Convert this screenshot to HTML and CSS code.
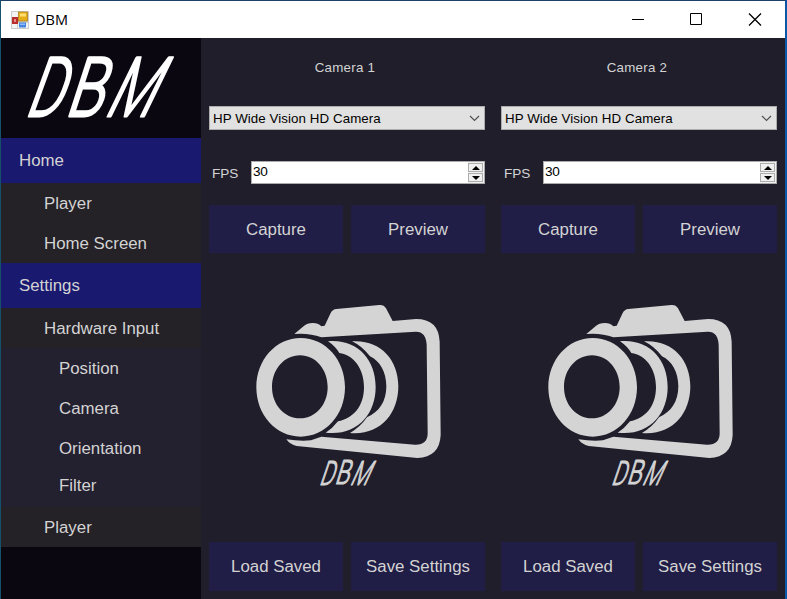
FILE: index.html
```html
<!DOCTYPE html>
<html lang="en">
<head>
<meta charset="utf-8">
<title>DBM</title>
<link rel="stylesheet" href="styles.css">
</head>
<body>
<svg class="defs" width="0" height="0" aria-hidden="true">
  <symbol id="camera" viewBox="0 0 615 600">
    <path fill="#d4d4d4" fill-rule="evenodd" d="M148 117 L172 97 Q184 84 204 84 Q219 84 229 94 L239 92 L257 54 Q263 43 274 42 L403 30 Q417 29 423 40 L443 78 L513 72 Q581 72 584 140 L587 420 Q584 486 517 489 L155 453 Q135 449 124 433 Q165 439 198 436 L229 425 L510 449 Q548 450 548 415 L545 150 Q543 109 512 110 L229 127 Q192 113 148 117Z"/>
    <path fill="#d4d4d4" fill-rule="evenodd" d="M167 129 C241 129 300 194 300 277 C300 360 241 425 167 425 C93 425 34 360 34 277 C34 194 93 129 167 129Z M165 181 C118 181 81 223 81 276 C81 329 118 370 165 370 C212 370 248 329 248 276 C248 223 212 181 165 181Z"/>
    <path fill="#d4d4d4" d="M249 139 C334 131 392 191 392 276 C392 360 334 424 242 413 Q263 400 279 379 C324 370 357 335 357 276 C357 221 326 180 283 174 Q270 153 249 139Z"/>
    <path fill="#d4d4d4" d="M321 139 C405 133 460 193 460 274 C460 357 405 422 315 414 Q347 395 366 367 C402 351 424 320 424 274 C424 232 405 198 375 184 Q351 153 321 139Z"/>
  </symbol>
  <symbol id="chevron" viewBox="0 0 11 7"><path d="M1 1 5.5 5.5 10 1" fill="none" stroke="#505050" stroke-width="1.2"/></symbol>
</svg>
<div class="window">
  <header class="titlebar">
    <svg class="app-icon" viewBox="0 0 18 18">
      <rect width="18" height="18" fill="#ccc"/><path d="M1 1h6v5H1zM7 12h10v5H7zM1 13h5v4H1z" fill="#f3f3f3"/>
      <rect x="1" y="6" width="6" height="7" fill="#b92d2d"/><rect x="3" y="8" width="2" height="3" fill="#e58c85"/>
      <rect x="7.5" y="1" width="9" height="9" fill="#e5ad18" stroke="#a87c17" stroke-width=".7"/><path d="M9 2.5h6v3H9z" fill="#ffdf70"/>
      <rect x="8" y="11.5" width="7" height="5" fill="#4684df"/><path d="M9 12.5h5v1.5H9z" fill="#91bdfb"/>
    </svg>
    <span class="caption">DBM</span>
    <svg class="controls" viewBox="0 0 130 13" fill="none" stroke="#000" stroke-width="1">
      <path d="M0 6.5h12M58.500.5h11v11h-11z"/><path stroke-width="1.3" d="M117 .5l12 12M129 .5l-12 12"/>
    </svg>
  </header>
  <div class="content">
    <nav class="sidebar">
      <svg class="logo" viewBox="0 0 200 100">
        <g class="mark">
          <text transform="translate(23 78) skewX(-20) scale(.67 1)">D</text>
          <text transform="translate(63 77.500) skewX(-18) scale(.74 1)">B</text>
          <text transform="translate(102 78) skewX(-26) scale(.65 1)">M</text>
        </g>
      </svg>
      <div class="group">Home</div>
      <div class="item">Player</div>
      <div class="item">Home Screen</div>
      <div class="group">Settings</div>
      <div class="item">Hardware Input</div>
      <div class="leaf">Position</div>
      <div class="leaf">Camera</div>
      <div class="leaf">Orientation</div>
      <div class="leaf last">Filter</div>
      <div class="item">Player</div>
    </nav>
    <main class="cameras">
      <section class="camera">
        <h2>Camera 1</h2>
        <div class="select"><span>HP Wide Vision HD Camera</span><svg><use href="#chevron"/></svg></div>
        <div class="fps"><label>FPS</label><div class="number"><span>30</span><div class="spin"><i class="up"></i><i class="down"></i></div></div></div>
        <div class="buttons"><div class="button">Capture</div><div class="button">Preview</div></div>
        <svg class="picture" viewBox="0 0 205 200">
          <use href="#camera" width="205" height="200"/>
          <g class="mark" transform="translate(65 160.500) scale(.385 .41)">
            <text transform="translate(23 71) skewX(-20) scale(.67 1)">D</text>
            <text transform="translate(63 70) skewX(-18) scale(.74 1)">B</text>
            <text transform="translate(102 71) skewX(-26) scale(.65 1)">M</text>
          </g>
        </svg>
        <div class="buttons tall"><div class="button">Load Saved</div><div class="button">Save Settings</div></div>
      </section>
      <section class="camera">
        <h2>Camera 2</h2>
        <div class="select"><span>HP Wide Vision HD Camera</span><svg><use href="#chevron"/></svg></div>
        <div class="fps"><label>FPS</label><div class="number"><span>30</span><div class="spin"><i class="up"></i><i class="down"></i></div></div></div>
        <div class="buttons"><div class="button">Capture</div><div class="button">Preview</div></div>
        <svg class="picture" viewBox="0 0 205 200">
          <use href="#camera" width="205" height="200"/>
          <g class="mark" transform="translate(65 160.500) scale(.385 .41)">
            <text transform="translate(23 71) skewX(-20) scale(.67 1)">D</text>
            <text transform="translate(63 70) skewX(-18) scale(.74 1)">B</text>
            <text transform="translate(102 71) skewX(-26) scale(.65 1)">M</text>
          </g>
        </svg>
        <div class="buttons tall"><div class="button">Load Saved</div><div class="button">Save Settings</div></div>
      </section>
    </main>
  </div>
</div>
</body>
</html>
```
FILE: styles.css
```css
* { box-sizing: border-box; }
body { margin: 0; overflow: hidden; font-family: "Liberation Sans", Arial, sans-serif; font-size: 16.85px; color: #d3d3d3; }
.defs { position: absolute; }
.window { height: 599px; display: flex; flex-direction: column; border-top: 1px solid #1f4168; border-left: 1px solid #17506b; border-right: 2px solid #0b57a8; background: #201e2b; }
.titlebar { height: 37px; flex: none; display: flex; align-items: center; padding: 0 23px 0 10px; background: #fff; color: #000; }
.app-icon { width: 18px; height: 18px; margin-right: 6px; }
.caption { font: 14.5px/20px "Open Sans", sans-serif; }
.controls { width: 130px; height: 13px; margin-left: auto; }
.content { flex: 1; display: flex; min-height: 0; }
.sidebar { width: 200px; flex: none; background: #0a0710; }
.logo { display: block; width: 200px; height: 100px; overflow: visible; }
.mark { font: 300 82px Roboto, "Liberation Sans", sans-serif; fill: #fff; stroke: #fff; stroke-width: 3px; stroke-linejoin: round; }
.picture .mark { fill: #d4d4d4; stroke: #d4d4d4; }
.group, .item, .leaf { display: flex; align-items: center; height: 40px; padding: 1px 0 0 43px; background: #242127; }
.group { height: 45px; padding: 0 0 0 18px; background: #191970; }
.leaf { padding-left: 58px; background: #232030; }
.last { height: 39px; padding-bottom: 4px; }
.cameras { display: flex; }
.camera { width: 292px; padding: 0 8px; display: flex; flex-direction: column; }
h2 { margin: 0; height: 68px; padding-top: 21px; text-align: center; font-size: 13.33px; line-height: 17px; font-weight: 400; letter-spacing: .25px; padding-right: 4px; }
.select { height: 24px; display: flex; align-items: center; justify-content: space-between; padding: 0 4px 0 3px; border: 1px solid #adadad; background: #e1e1e1; color: #000; font-size: 13.33px; letter-spacing: .07px; }
.select svg { width: 11px; height: 7px; }
.fps { height: 23px; display: flex; margin-top: 31px; font-size: 13.6px; }
.fps label { width: 42px; padding: 4px 0 0 3px; line-height: 17px; }
.number { flex: 1; display: flex; justify-content: space-between; border: 1px solid #ababab; background: #fff; color: #000; line-height: 19px; padding-left: 1px; }
.number span { letter-spacing: -.3px; }
.spin { width: 16px; padding: 1px 1px 1px 0; display: flex; flex-direction: column; gap: 1px; background: #f0f0f0; }
.spin i { height: 9px; flex: none; display: flex; align-items: center; justify-content: center; border: 1px solid #adadad; }
.spin i::before { content: ""; border: 4px solid transparent; border-top: 0; border-bottom: 4px solid #000; }
.spin .down::before { border-bottom: 0; border-top: 4px solid #000; }
.buttons { display: flex; gap: 8px; margin-top: 21px; }
.button { flex: 1; height: 48px; display: flex; align-items: center; justify-content: center; padding-top: 1px; background: #201d46; }
.picture { width: 205px; height: 200px; margin: 42px 0 0 36px; overflow: visible; }
.tall { margin-top: 47px; }
.tall .button { height: 49px; }
```
